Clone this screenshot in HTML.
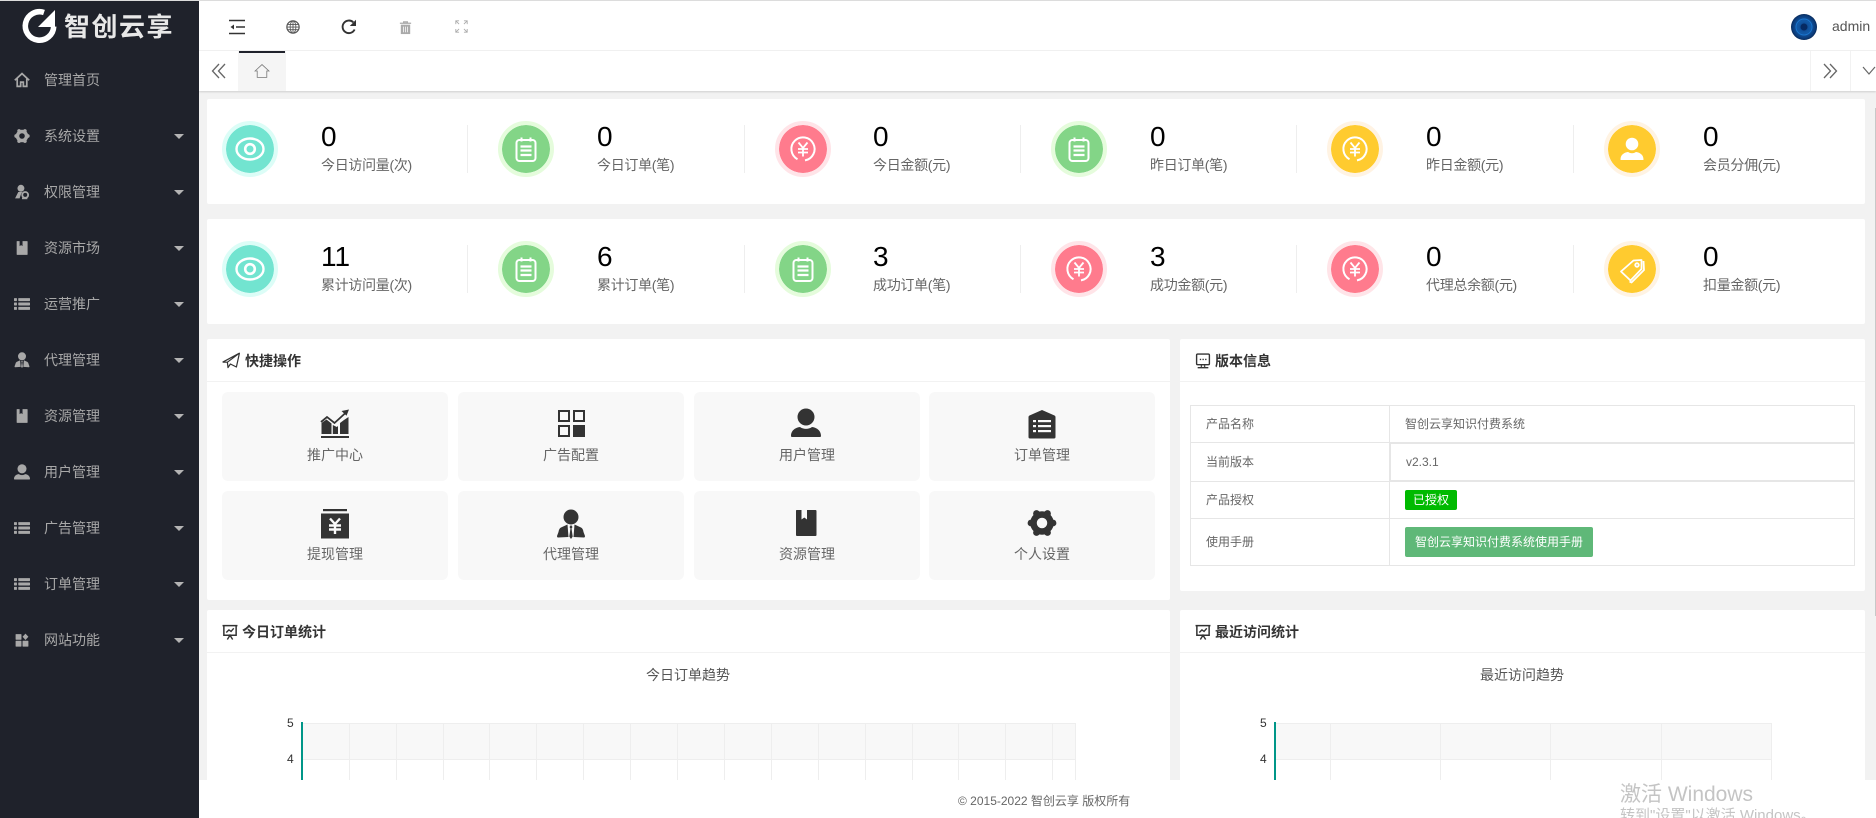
<!DOCTYPE html>
<html lang="zh-CN">
<head>
<meta charset="utf-8">
<title>智创云享</title>
<style>
html,body{margin:0;padding:0;width:1876px;height:818px;overflow:hidden;background:#f2f2f2;font-family:"Liberation Sans","Noto Sans CJK SC",sans-serif;font-size:14px;color:#666}
div,svg,span{position:absolute;box-sizing:border-box}
.t{white-space:nowrap;line-height:20px}
.c{text-align:center}
.w{background:#fff;border-radius:2px}
.m{left:44px;color:#a8a8a8}
.ic{left:14px;color:#a8a8a8}
.car{left:174px;width:0;height:0;border-left:5px solid transparent;border-right:5px solid transparent;border-top:5px solid #b4b4b4}
.r{width:56px;height:56px;border-radius:50%;border:4px solid}
.teal{background:#72e4d0;border-color:#dcfdf7;background-clip:padding-box}
.green{background:#83d587;border-color:#e5fcdc;background-clip:padding-box}
.pink{background:#ff7b8d;border-color:#ffe4e8;background-clip:padding-box}
.yel{background:#ffcb2f;border-color:#fff3e3;background-clip:padding-box}
.r svg{left:0;top:0;width:48px;height:48px;color:#fff}
.n{font-size:28px;color:#000;line-height:32px;white-space:nowrap}
.l{color:#666;white-space:nowrap;line-height:20px;letter-spacing:-.3px}
.sep{width:1px;height:48px;background:#eee}
.tile{width:226px;height:89px;background:#f8f8f8;border-radius:6px}
.ti{width:30px;height:30px;color:#333}
.ph{font-weight:700;color:#333}
.hl{height:1px;background:#f2f2f2}
.gv{width:1px;background:#eee}
.gh{height:1px;background:#eee}
.td{font-size:12px;color:#666;line-height:20px;white-space:nowrap}
.b{background:#e6e6e6}
</style>
</head>
<body>
<div style="left:0;top:0;width:1876px;height:818px;overflow:hidden">
<svg width="0" height="0" style="left:0;top:0">
<defs>
<symbol id="eye" viewBox="0 0 48 48"><ellipse cx="24" cy="24" rx="13.5" ry="10.5" fill="none" stroke="#fff" stroke-width="2.4"/><circle cx="24" cy="24" r="4.8" fill="none" stroke="#fff" stroke-width="2.6"/></symbol>
<symbol id="note" viewBox="0 0 48 48"><rect x="14.5" y="15" width="19" height="21" rx="3" fill="none" stroke="#fff" stroke-width="2"/><path d="M19.500 12.500v4M28.500 12.500v4" stroke="#fff" stroke-width="2" fill="none"/><path d="M18.500 21.500h11M18.500 25.500h11M18.500 30h11" stroke="#fff" stroke-width="2.200" fill="none"/></symbol>
<symbol id="yen" viewBox="0 0 48 48"><path d="M18.500 34.200A11.600 11.600 0 1 1 26 35.400" fill="none" stroke="#fff" stroke-width="2"/><path d="M19.500 17.500L24 23l4.500-5.500M24 23v8.500M19 24h10M19 27.500h10" fill="none" stroke="#fff" stroke-width="1.800"/></symbol>
<symbol id="user2" viewBox="0 0 48 48"><circle cx="24" cy="19" r="6.300" fill="#fff"/><path d="M12.500 34.500c0-5 4-7 7.500-7.500q4 2.500 8 0c3.500.5 7.500 2.500 7.500 7.500 0 .3-.2.500-.5.500H13c-.3 0-.5-.2-.5-.5z" fill="#fff"/></symbol>
<symbol id="tag" viewBox="0 0 48 48"><g fill="none" stroke="#fff" stroke-width="1.800" stroke-linejoin="round"><path d="M13 26.500L25.500 15.500l8-.5v9L22.500 35.500z"/><path d="M35.500 16l.5 9-12.500 12.500-2-1"/><circle cx="29" cy="20" r="1.800"/></g></symbol>

<symbol id="home" viewBox="0 0 30 30"><path d="M1.500 15.500L15 3l13.500 12.500M6 12.500V27h6.500v-8h5v8H24V12.500" fill="none" stroke="currentColor" stroke-width="3.200"/></symbol>
<symbol id="homet" viewBox="0 0 30 30"><path d="M2 15L15 3l13 12h-4v12H6V15z" fill="none" stroke="currentColor" stroke-width="1.500"/></symbol>
<symbol id="gear" viewBox="0 0 30 30"><circle cx="15" cy="15" r="8.500" fill="none" stroke="currentColor" stroke-width="6.500"/><g fill="currentColor"><circle cx="26" cy="15" r="3.400"/><circle cx="20.500" cy="24.500" r="3.400"/><circle cx="9.500" cy="24.500" r="3.400"/><circle cx="4" cy="15" r="3.400"/><circle cx="9.500" cy="5.500" r="3.400"/><circle cx="20.500" cy="5.500" r="3.400"/></g></symbol>
<symbol id="key" viewBox="0 0 30 30"><circle cx="13" cy="8" r="6.500" fill="currentColor"/><path d="M2 27L8 15h7.500l-2 3-3 9z" fill="currentColor"/><circle cx="21" cy="20.500" r="5.500" fill="none" stroke="currentColor" stroke-width="3.500"/><path d="M15 27h10" stroke="currentColor" stroke-width="3"/></symbol>
<symbol id="book" viewBox="0 0 30 30"><path d="M5.500 2H10.500v9.500l2.800-2 2.700 2V2h8.500q1 0 1 1v24q0 1-1 1H6q-1 0-1-1V3q0-1 .5-1z" fill="currentColor"/></symbol>
<symbol id="list" viewBox="0 0 30 30"><g fill="currentColor"><rect x="0" y="4" width="5.500" height="5.500" rx="1"/><rect x="8" y="4" width="22" height="5.500" rx="1"/><rect x="0" y="12.200" width="5.500" height="5.500" rx="1"/><rect x="8" y="12.200" width="22" height="5.500" rx="1"/><rect x="0" y="20.500" width="5.500" height="5.500" rx="1"/><rect x="8" y="20.500" width="22" height="5.500" rx="1"/></g></symbol>
<symbol id="agent" viewBox="0 0 30 30"><circle cx="15" cy="8" r="7.500" fill="currentColor"/><path d="M11.500 15.500L5 18.500q-2 1-2.500 4.500L1 27q0 1.500 1 1.500L12.500 28zM18.500 15.500L25 18.500q2 1 2.500 4.500l1.500 4q0 1.500-1 1.500L17.500 28zM15 16l-1.500 2 1 1.500-1.200 8L15 30l1.700-2.500-1.200-8 1-1.500z" fill="currentColor"/></symbol>
<symbol id="user" viewBox="0 0 30 30"><circle cx="15" cy="9" r="8.500" fill="currentColor"/><path d="M0 28c0-6 5-8.500 9-9 3.500 2.500 8.500 2.500 12 0 4 .5 9 3 9 9 0 .6-.4 1-1 1H1c-.6 0-1-.4-1-1z" fill="currentColor"/></symbol>
<symbol id="puz" viewBox="0 0 30 30"><g fill="currentColor"><rect x="3" y="4" width="11" height="10.500" rx="1"/><rect x="3" y="16.500" width="11" height="11" rx="1"/><rect x="16" y="16.500" width="11" height="11" rx="1"/><path d="M21.500 3l5.500 6-5.500 6-5.500-6z"/></g></symbol>

<symbol id="trend" viewBox="0 0 30 30"><g fill="currentColor"><rect x="1" y="27" width="28" height="2"/><path d="M1.500 25V14l5-3.500 5 4V25zM12.800 25V16l4 2 1.200-1v8zM20 25V14l4-3 4.500-3V25z"/><path d="M29 .5l-7.500 1.500 5 4.800z"/></g><path d="M1 13l6-5 7.500 6L26 3.500" fill="none" stroke="currentColor" stroke-width="1.800"/></symbol>
<symbol id="grid4" viewBox="0 0 30 30"><g fill="none" stroke="currentColor" stroke-width="2"><rect x="3" y="3" width="10" height="10"/><rect x="18" y="3" width="10" height="10"/><rect x="3" y="18" width="10" height="10"/></g><rect x="17" y="17" width="12" height="12" fill="currentColor"/></symbol>
<symbol id="order" viewBox="0 0 30 30"><path d="M15 1l12.500 5.500q1 .5 1 1.500v20q0 1.500-1.500 1.500H3q-1.500 0-1.500-1.500V8q0-1 1-1.500z" fill="currentColor"/><g fill="#f8f8f8"><rect x="6" y="11" width="3" height="2.200"/><rect x="11" y="11" width="13" height="2.200"/><rect x="6" y="16" width="3" height="2.200"/><rect x="11" y="16" width="13" height="2.200"/><rect x="6" y="21" width="3" height="2.200"/><rect x="11" y="21" width="13" height="2.200"/></g></symbol>
<symbol id="wd" viewBox="0 0 30 30"><rect x="3" y="0" width="24" height="2.200" fill="currentColor"/><path d="M1 4.500h28V29.500H1z" fill="currentColor"/><path d="M10 9.500l5 5.500 5-5.500M15 15v10M9 16.500h12M9 20.500h12" fill="none" stroke="#f8f8f8" stroke-width="2.400"/></symbol>

<symbol id="plane" viewBox="0 0 30 30"><path d="M1 17L29 2 24 25l-10-5-4 6-1-9L29 2M1 17l8 0" fill="none" stroke="currentColor" stroke-width="2" stroke-linejoin="round"/></symbol>
<symbol id="mon" viewBox="0 0 30 30"><rect x="3" y="2" width="24" height="20" rx="2" fill="none" stroke="currentColor" stroke-width="2.600"/><path d="M9 12h2.500M14 12h2.500M19 12h2.500" stroke="currentColor" stroke-width="2.600"/><path d="M12 23v3M18 23v3M5 27.500h20" stroke="currentColor" stroke-width="2.600" fill="none"/></symbol>
<symbol id="pres" viewBox="0 0 30 30"><path d="M1 3h28M3.500 3v18h23V3" fill="none" stroke="currentColor" stroke-width="2.800"/><path d="M8 16l5-5 4 3 5-6M10 29l5-8 5 8" fill="none" stroke="currentColor" stroke-width="2.600"/></symbol>

<symbol id="indent" viewBox="0 0 16 16"><path d="M0 1.500h16M7 8h9M0 14.500h16" stroke="currentColor" stroke-width="1.500" fill="none"/><path d="M1.500 8L5 5.500v5z" fill="currentColor"/></symbol>
<symbol id="globe" viewBox="0 0 16 16"><g fill="none" stroke="currentColor"><circle cx="8" cy="8" r="7" stroke-width="1.400"/><ellipse cx="8" cy="8" rx="3.300" ry="7" stroke-width="1"/><path d="M8 1v14M1.500 5h13M1 8h14M1.500 11h13" stroke-width="1"/></g></symbol>
<symbol id="refresh" viewBox="0 0 16 16"><path d="M13.600 10.500A6.300 6.300 0 1 1 12.300 3.300" fill="none" stroke="currentColor" stroke-width="1.900"/><path d="M15 .8v6.200H8.800z" fill="currentColor"/></symbol>
<symbol id="trash" viewBox="0 0 16 16"><path d="M2 3.500h12M6 3.500V2h4v1.500" fill="none" stroke="currentColor" stroke-width="1.300"/><path d="M3 5h10v10H3z" fill="currentColor"/><path d="M5.800 7v6M8 7v6M10.200 7v6" stroke="#fff" stroke-width=".8"/></symbol>
<symbol id="full" viewBox="0 0 16 16"><g fill="none" stroke="currentColor" stroke-width="1.100"><path d="M1 5V1h4M1 1l4 4M15 5V1h-4M15 1l-4 4M1 11v4h4M1 15l4-4M15 11v4h-4M15 15l-4-4"/></g></symbol>
<radialGradient id="av" cx="50%" cy="50%" r="55%"><stop offset="0" stop-color="#0a3f86"/><stop offset=".45" stop-color="#125aa8"/><stop offset=".8" stop-color="#0b3a78"/><stop offset="1" stop-color="#051c3e"/></radialGradient>
</defs>
</svg>

<!-- top line -->
<div style="left:0;top:0;width:1876px;height:1px;background:#dcdcdc;z-index:9"></div>

<!-- header -->
<div style="left:199px;top:1px;width:1677px;height:50px;background:#fff;border-bottom:1px solid #f2f2f2"></div>
<svg style="left:229px;top:19px;width:16px;height:16px;color:#333"><use href="#indent"/></svg>
<svg style="left:286px;top:20px;width:14px;height:14px;color:#555"><use href="#globe"/></svg>
<svg style="left:341px;top:19px;width:16px;height:16px;color:#333"><use href="#refresh"/></svg>
<svg style="left:398px;top:20px;width:15px;height:15px;color:#aaa"><use href="#trash"/></svg>
<svg style="left:455px;top:20px;width:13px;height:13px;color:#aaa"><use href="#full"/></svg>
<svg style="left:1791px;top:14px;width:26px;height:26px"><circle cx="13" cy="13" r="13" fill="url(#av)"/><circle cx="13" cy="13" r="3.500" fill="#062a63"/><circle cx="13" cy="13" r="8" fill="none" stroke="#1a74cc" stroke-width="1"/></svg>
<div class="t" style="left:1832px;top:16px;color:#555;font-size:14px">admin</div>

<!-- tabs -->
<div style="left:199px;top:51px;width:1677px;height:40px;background:#fff;box-shadow:0 1px 2px rgba(0,0,0,.15)"></div>
<svg style="left:211px;top:63px;width:16px;height:16px"><path d="M8 1L1.500 8 8 15M14 1L7.500 8 14 15" fill="none" stroke="#666" stroke-width="1.300"/></svg>
<div style="left:238px;top:51px;width:48px;height:40px;background:#f5f5f5"></div>
<div style="left:239px;top:51px;width:46px;height:2px;background:#1f222b"></div>
<svg style="left:254px;top:63px;width:16px;height:16px;color:#777"><use href="#homet"/></svg>
<div style="left:1810px;top:51px;width:1px;height:40px;background:#f2f2f2"></div>
<div style="left:1850px;top:51px;width:1px;height:40px;background:#f2f2f2"></div>
<svg style="left:1822px;top:63px;width:16px;height:16px"><path d="M2 1l6.500 7L2 15M8 1l6.500 7L8 15" fill="none" stroke="#666" stroke-width="1.300"/></svg>
<svg style="left:1862px;top:66px;width:14px;height:10px"><path d="M1 1l6 7 6-7" fill="none" stroke="#666" stroke-width="1.200"/></svg>

<!-- stat card 1 -->
<div class="w" style="left:207px;top:99px;width:1658px;height:105px"></div>
<div class="r teal" style="left:222px;top:121px"><svg><use href="#eye"/></svg></div>
<div class="n" style="left:321px;top:121px">0</div><div class="l" style="left:321px;top:155px">今日访问量(次)</div>
<div class="sep" style="left:467px;top:125px"></div>
<div class="r green" style="left:498px;top:121px"><svg><use href="#note"/></svg></div>
<div class="n" style="left:597px;top:121px">0</div><div class="l" style="left:597px;top:155px">今日订单(笔)</div>
<div class="sep" style="left:744px;top:125px"></div>
<div class="r pink" style="left:775px;top:121px"><svg><use href="#yen"/></svg></div>
<div class="n" style="left:873px;top:121px">0</div><div class="l" style="left:873px;top:155px">今日金额(元)</div>
<div class="sep" style="left:1020px;top:125px"></div>
<div class="r green" style="left:1051px;top:121px"><svg><use href="#note"/></svg></div>
<div class="n" style="left:1150px;top:121px">0</div><div class="l" style="left:1150px;top:155px">昨日订单(笔)</div>
<div class="sep" style="left:1296px;top:125px"></div>
<div class="r yel" style="left:1327px;top:121px"><svg><use href="#yen"/></svg></div>
<div class="n" style="left:1426px;top:121px">0</div><div class="l" style="left:1426px;top:155px">昨日金额(元)</div>
<div class="sep" style="left:1573px;top:125px"></div>
<div class="r yel" style="left:1604px;top:121px"><svg><use href="#user2"/></svg></div>
<div class="n" style="left:1703px;top:121px">0</div><div class="l" style="left:1703px;top:155px">会员分佣(元)</div>

<!-- stat card 2 -->
<div class="w" style="left:207px;top:219px;width:1658px;height:105px"></div>
<div class="r teal" style="left:222px;top:241px"><svg><use href="#eye"/></svg></div>
<div class="n" style="left:321px;top:241px">11</div><div class="l" style="left:321px;top:275px">累计访问量(次)</div>
<div class="sep" style="left:467px;top:245px"></div>
<div class="r green" style="left:498px;top:241px"><svg><use href="#note"/></svg></div>
<div class="n" style="left:597px;top:241px">6</div><div class="l" style="left:597px;top:275px">累计订单(笔)</div>
<div class="sep" style="left:744px;top:245px"></div>
<div class="r green" style="left:775px;top:241px"><svg><use href="#note"/></svg></div>
<div class="n" style="left:873px;top:241px">3</div><div class="l" style="left:873px;top:275px">成功订单(笔)</div>
<div class="sep" style="left:1020px;top:245px"></div>
<div class="r pink" style="left:1051px;top:241px"><svg><use href="#yen"/></svg></div>
<div class="n" style="left:1150px;top:241px">3</div><div class="l" style="left:1150px;top:275px">成功金额(元)</div>
<div class="sep" style="left:1296px;top:245px"></div>
<div class="r pink" style="left:1327px;top:241px"><svg><use href="#yen"/></svg></div>
<div class="n" style="left:1426px;top:241px">0</div><div class="l" style="left:1426px;top:275px">代理总余额(元)</div>
<div class="sep" style="left:1573px;top:245px"></div>
<div class="r yel" style="left:1604px;top:241px"><svg><use href="#tag"/></svg></div>
<div class="n" style="left:1703px;top:241px">0</div><div class="l" style="left:1703px;top:275px">扣量金额(元)</div>

<!-- quick panel -->
<div class="w" style="left:207px;top:339px;width:963px;height:261px"></div>
<div class="hl" style="left:207px;top:381px;width:963px"></div>
<svg style="left:222px;top:352px;width:18px;height:18px;color:#333"><use href="#plane"/></svg>
<div class="t ph" style="left:245px;top:351px">快捷操作</div>

<div class="tile" style="left:222px;top:392px"></div>
<div class="tile" style="left:458px;top:392px"></div>
<div class="tile" style="left:694px;top:392px"></div>
<div class="tile" style="left:929px;top:392px"></div>
<div class="tile" style="left:222px;top:491px"></div>
<div class="tile" style="left:458px;top:491px"></div>
<div class="tile" style="left:694px;top:491px"></div>
<div class="tile" style="left:929px;top:491px"></div>

<svg class="ti" style="left:320px;top:409px"><use href="#trend"/></svg>
<svg class="ti" style="left:556px;top:408px"><use href="#grid4"/></svg>
<svg class="ti" style="left:791px;top:408px"><use href="#user"/></svg>
<svg class="ti" style="left:1027px;top:409px"><use href="#order"/></svg>
<svg class="ti" style="left:320px;top:509px"><use href="#wd"/></svg>
<svg class="ti" style="left:556px;top:509px"><use href="#agent"/></svg>
<svg class="ti" style="left:791px;top:508px"><use href="#book"/></svg>
<svg class="ti" style="left:1027px;top:508px"><use href="#gear"/></svg>

<div class="t c" style="left:222px;top:445px;width:226px">推广中心</div>
<div class="t c" style="left:458px;top:445px;width:226px">广告配置</div>
<div class="t c" style="left:694px;top:445px;width:226px">用户管理</div>
<div class="t c" style="left:929px;top:445px;width:226px">订单管理</div>
<div class="t c" style="left:222px;top:544px;width:226px">提现管理</div>
<div class="t c" style="left:458px;top:544px;width:226px">代理管理</div>
<div class="t c" style="left:694px;top:544px;width:226px">资源管理</div>
<div class="t c" style="left:929px;top:544px;width:226px">个人设置</div>

<!-- version panel -->
<div class="w" style="left:1180px;top:339px;width:685px;height:252px"></div>
<div class="hl" style="left:1180px;top:381px;width:685px"></div>
<svg style="left:1195px;top:353px;width:16px;height:16px;color:#333"><use href="#mon"/></svg>
<div class="t ph" style="left:1215px;top:351px">版本信息</div>

<div class="b" style="left:1190px;top:405px;width:665px;height:1px"></div>
<div class="b" style="left:1190px;top:442px;width:665px;height:1px"></div>
<div class="b" style="left:1389px;top:443px;width:466px;height:1px"></div>
<div class="b" style="left:1190px;top:481px;width:665px;height:1px"></div>
<div class="b" style="left:1389px;top:480px;width:466px;height:1px"></div>
<div class="b" style="left:1190px;top:518px;width:665px;height:1px"></div>
<div class="b" style="left:1190px;top:565px;width:665px;height:1px"></div>
<div class="b" style="left:1190px;top:405px;width:1px;height:161px"></div>
<div class="b" style="left:1389px;top:405px;width:1px;height:161px"></div>
<div class="b" style="left:1390px;top:443px;width:1px;height:38px"></div>
<div class="b" style="left:1854px;top:405px;width:1px;height:161px"></div>

<div class="td" style="left:1206px;top:414px">产品名称</div>
<div class="td" style="left:1405px;top:414px">智创云享知识付费系统</div>
<div class="td" style="left:1206px;top:452px">当前版本</div>
<div class="td" style="left:1406px;top:452px">v2.3.1</div>
<div class="td" style="left:1206px;top:490px">产品授权</div>
<div class="td c" style="left:1405px;top:490px;width:52px;height:20px;background:#00ba00;color:#fff;border-radius:2px">已授权</div>
<div class="td" style="left:1206px;top:532px">使用手册</div>
<div class="td c" style="left:1405px;top:527px;width:188px;height:30px;line-height:30px;background:#5fb878;color:#fff;border-radius:2px">智创云享知识付费系统使用手册</div>

<!-- today chart panel -->
<div class="w" style="left:207px;top:610px;width:963px;height:175px"></div>
<div class="hl" style="left:207px;top:652px;width:963px"></div>
<svg style="left:222px;top:623px;width:16px;height:18px;color:#333"><use href="#pres"/></svg>
<div class="t ph" style="left:242px;top:622px">今日订单统计</div>
<div class="t c" style="left:588px;top:665px;width:200px;color:#555">今日订单趋势</div>
<div style="left:302px;top:723px;width:774px;height:36px;background:#f8f8f8"></div>
<div class="gh" style="left:302px;top:723px;width:774px"></div>
<div class="gh" style="left:302px;top:759px;width:774px"></div>
<div class="gv" style="left:349px;top:723px;height:60px"></div>
<div class="gv" style="left:396px;top:723px;height:60px"></div>
<div class="gv" style="left:443px;top:723px;height:60px"></div>
<div class="gv" style="left:489px;top:723px;height:60px"></div>
<div class="gv" style="left:536px;top:723px;height:60px"></div>
<div class="gv" style="left:583px;top:723px;height:60px"></div>
<div class="gv" style="left:630px;top:723px;height:60px"></div>
<div class="gv" style="left:677px;top:723px;height:60px"></div>
<div class="gv" style="left:724px;top:723px;height:60px"></div>
<div class="gv" style="left:771px;top:723px;height:60px"></div>
<div class="gv" style="left:818px;top:723px;height:60px"></div>
<div class="gv" style="left:865px;top:723px;height:60px"></div>
<div class="gv" style="left:912px;top:723px;height:60px"></div>
<div class="gv" style="left:958px;top:723px;height:60px"></div>
<div class="gv" style="left:1005px;top:723px;height:60px"></div>
<div class="gv" style="left:1052px;top:723px;height:60px"></div>
<div class="gv" style="left:1075px;top:723px;height:60px"></div>
<div style="left:301px;top:722px;width:2px;height:62px;background:#009688"></div>
<div class="t" style="left:287px;top:713px;font-size:12px;color:#333">5</div>
<div class="t" style="left:287px;top:749px;font-size:12px;color:#333">4</div>

<!-- visit chart panel -->
<div class="w" style="left:1180px;top:610px;width:685px;height:175px"></div>
<div class="hl" style="left:1180px;top:652px;width:685px"></div>
<svg style="left:1195px;top:623px;width:16px;height:18px;color:#333"><use href="#pres"/></svg>
<div class="t ph" style="left:1215px;top:622px">最近访问统计</div>
<div class="t c" style="left:1422px;top:665px;width:200px;color:#555">最近访问趋势</div>
<div style="left:1276px;top:723px;width:496px;height:36px;background:#f8f8f8"></div>
<div class="gh" style="left:1276px;top:723px;width:496px"></div>
<div class="gh" style="left:1276px;top:759px;width:496px"></div>
<div class="gv" style="left:1330px;top:723px;height:60px"></div>
<div class="gv" style="left:1440px;top:723px;height:60px"></div>
<div class="gv" style="left:1550px;top:723px;height:60px"></div>
<div class="gv" style="left:1661px;top:723px;height:60px"></div>
<div class="gv" style="left:1771px;top:723px;height:60px"></div>
<div style="left:1274px;top:722px;width:2px;height:62px;background:#009688"></div>
<div class="t" style="left:1260px;top:713px;font-size:12px;color:#333">5</div>
<div class="t" style="left:1260px;top:749px;font-size:12px;color:#333">4</div>

<!-- scrollbar hint -->
<div style="left:1875px;top:108px;width:1px;height:508px;background:#c8c8c8"></div>

<!-- footer -->
<div style="left:199px;top:780px;width:1677px;height:38px;background:#fff"></div>
<div class="t" style="left:958px;top:791px;font-size:12px;color:#666">© 2015-2022 智创云享 版权所有</div>
<div class="t" style="left:1620px;top:783px;font-size:21px;line-height:24px;color:#c4c4c4">激活 Windows</div>
<div class="t" style="left:1620px;top:806px;font-size:15px;color:#c4c4c4">转到"设置"以激活 Windows。</div>

<!-- sidebar -->
<div style="left:0;top:0;width:199px;height:818px;background:#1f222b"></div>
<svg style="left:20px;top:6px;width:40px;height:40px"><path d="M24 6.500A14.200 14.200 0 1 0 33.700 20.500" fill="none" stroke="#fff" stroke-width="5.600"/><path d="M35 4L18 21h17z" fill="#fff"/></svg>
<div class="t" style="left:64px;top:11px;font-size:26px;line-height:32px;font-weight:700;color:#e8e8e8;letter-spacing:1.500px">智创云享</div>

<svg class="ic" style="top:72px;width:16px;height:16px"><use href="#home"/></svg><div class="t m" style="top:70px">管理首页</div>
<svg class="ic" style="top:128px;width:16px;height:16px"><use href="#gear"/></svg><div class="t m" style="top:126px">系统设置</div><div class="car" style="top:134px"></div>
<svg class="ic" style="top:184px;width:16px;height:16px"><use href="#key"/></svg><div class="t m" style="top:182px">权限管理</div><div class="car" style="top:190px"></div>
<svg class="ic" style="top:240px;width:16px;height:16px"><use href="#book"/></svg><div class="t m" style="top:238px">资源市场</div><div class="car" style="top:246px"></div>
<svg class="ic" style="top:296px;width:16px;height:16px"><use href="#list"/></svg><div class="t m" style="top:294px">运营推广</div><div class="car" style="top:302px"></div>
<svg class="ic" style="top:352px;width:16px;height:16px"><use href="#agent"/></svg><div class="t m" style="top:350px">代理管理</div><div class="car" style="top:358px"></div>
<svg class="ic" style="top:408px;width:16px;height:16px"><use href="#book"/></svg><div class="t m" style="top:406px">资源管理</div><div class="car" style="top:414px"></div>
<svg class="ic" style="top:464px;width:16px;height:16px"><use href="#user"/></svg><div class="t m" style="top:462px">用户管理</div><div class="car" style="top:470px"></div>
<svg class="ic" style="top:520px;width:16px;height:16px"><use href="#list"/></svg><div class="t m" style="top:518px">广告管理</div><div class="car" style="top:526px"></div>
<svg class="ic" style="top:576px;width:16px;height:16px"><use href="#list"/></svg><div class="t m" style="top:574px">订单管理</div><div class="car" style="top:582px"></div>
<svg class="ic" style="top:632px;width:16px;height:16px"><use href="#puz"/></svg><div class="t m" style="top:630px">网站功能</div><div class="car" style="top:638px"></div>
</div>
</body>
</html>
